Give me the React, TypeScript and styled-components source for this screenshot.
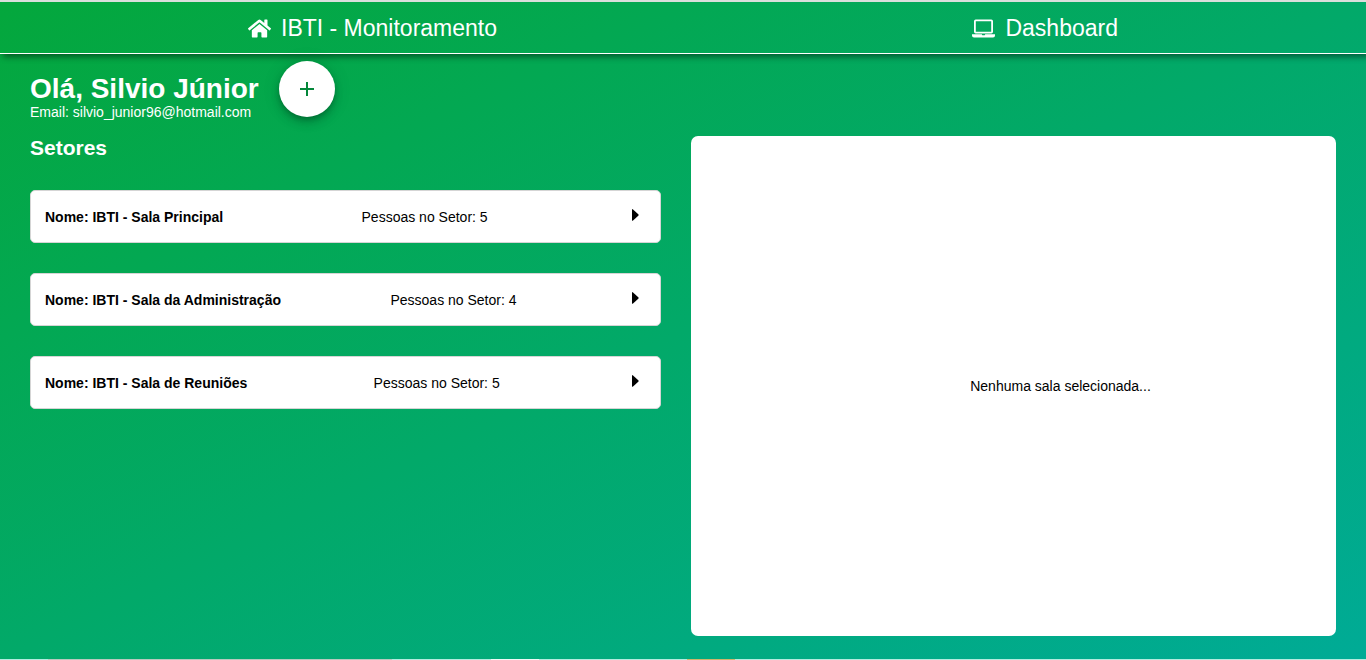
import React from 'react';
import styled, { createGlobalStyle } from 'styled-components';
import { FaHome } from 'react-icons/fa';

const GlobalStyle = createGlobalStyle`
  * { margin: 0; padding: 0; box-sizing: border-box; }
  body { font: 14px "Liberation Sans", Arial, sans-serif; color: #000; }
`;

const Page = styled.div`
  height: 660px;
  display: flex;
  flex-direction: column;
  overflow: hidden;
  border-top: 2px solid #dadfdc;
  background: linear-gradient(to bottom right, #04a73c, #00ab96);
`;

const Header = styled.header`
  flex: none;
  height: 52px;
  display: flex;
  justify-content: space-between;
  align-items: center;
  padding: 0 248px;
  border-bottom: 1px solid #fff;
  box-shadow: 3px 3px 6px rgba(0, 0, 0, 0.45);
`;

const NavItem = styled.a`
  display: flex;
  align-items: center;
  gap: 10px;
  color: #fff;
  font-size: 23px;
  line-height: 28px;
  svg { flex: none; margin-top: 2px; }
`;

const Main = styled.main`
  flex: 1;
  padding: 7px 30px 0;
`;

const Greeting = styled.section`
  display: flex;
  align-items: flex-start;
  gap: 20px;
  height: 75px;
  color: #fff;
`;

const UserInfo = styled.div`
  padding-top: 12px;
  h1 { font-size: 28px; line-height: 31px; }
  p { line-height: 16px; }
`;

const AddButton = styled.button`
  width: 56px;
  height: 56px;
  display: flex;
  align-items: center;
  justify-content: center;
  border: 0;
  border-radius: 50%;
  background: #fff;
  color: #04873a;
  box-shadow: 0 3px 5px -1px rgba(0, 0, 0, 0.2), 0 6px 10px 0 rgba(0, 0, 0, 0.14),
    0 1px 18px 0 rgba(0, 0, 0, 0.12);
`;

const Columns = styled.div`
  display: flex;
  gap: 30px;
`;

const Sectors = styled.section`
  width: 631px;
  h2 {
    color: #fff;
    font-size: 21px;
    line-height: 24px;
    margin-bottom: 30px;
  }
`;

const SectorCard = styled.article`
  display: flex;
  justify-content: space-between;
  align-items: center;
  height: 53px;
  margin-bottom: 30px;
  padding: 0 14px;
  border: 1px solid #d5d5d5;
  border-radius: 5px;
  background: #fff;
`;

const Arrow = styled.svg`
  width: 20px;
  height: 20px;
  margin: -4px 0 0;
`;

const RoomPanel = styled.section`
  flex: 1;
  height: 500px;
  display: flex;
  align-items: center;
  justify-content: center;
  padding-left: 94px;
  border-radius: 7px;
  background: #fff;
`;

const Taskbar = styled.footer`
  flex: none;
  display: flex;
  height: 1px;
  background: #b4ebdf;
`;

const TaskbarSlot = styled.span<{ $width: number; $color: string }>`
  width: ${(p) => p.$width}px;
  background: ${(p) => p.$color};
`;

const sectors = [
  { name: 'IBTI - Sala Principal', people: 5 },
  { name: 'IBTI - Sala da Administração', people: 4 },
  { name: 'IBTI - Sala de Reuniões', people: 5 },
];

const LaptopIcon = () => (
  <svg width="23" height="23" viewBox="0 0 23 23" fill="none">
    <rect x="2.9" y="3.4" width="17.2" height="12.2" rx="0.8" stroke="#fff" strokeWidth="1.8" />
    <path d="M0 17.3h9.8l.5 1h2.4l.5-1H23v1.2q0 2-2 2H2q-2 0-2-2Z" fill="#fff" />
  </svg>
);

export default function App() {
  return (
    <>
      <GlobalStyle />
      <Page>
        <Header>
          <NavItem><FaHome size={23} />IBTI - Monitoramento</NavItem>
          <NavItem><LaptopIcon />Dashboard</NavItem>
        </Header>
        <Main>
          <Greeting>
            <UserInfo>
              <h1>Olá, Silvio Júnior</h1>
              <p>Email: silvio_junior96@hotmail.com</p>
            </UserInfo>
            <AddButton aria-label="Adicionar setor">
              <svg width="14" height="14" viewBox="0 0 14 14" fill="currentColor">
                <path d="M14 8H8v6H6V8H0V6h6V0h2v6h6z" />
              </svg>
            </AddButton>
          </Greeting>
          <Columns>
            <Sectors>
              <h2>Setores</h2>
              {sectors.map((s) => (
                <SectorCard key={s.name}>
                  <strong>Nome: {s.name}</strong>
                  <span>Pessoas no Setor: {s.people}</span>
                  <Arrow viewBox="0 0 20 20">
                    <path d="M6 4.9q0-1.3 1-.5l5.3 4.8q.8.8 0 1.6L7 15.6q-1 .8-1-.5Z" />
                  </Arrow>
                </SectorCard>
              ))}
            </Sectors>
            <RoomPanel>Nenhuma sala selecionada...</RoomPanel>
          </Columns>
        </Main>
        <Taskbar>
          <TaskbarSlot $width={48} $color="#b4ebdf" />
          <TaskbarSlot $width={344} $color="#b9c9bf" />
          <TaskbarSlot $width={99} $color="#b4ebdf" />
          <TaskbarSlot $width={48} $color="#f0faf7" />
          <TaskbarSlot $width={148} $color="#b4ebdf" />
          <TaskbarSlot $width={48} $color="#d0b56c" />
        </Taskbar>
      </Page>
    </>
  );
}
